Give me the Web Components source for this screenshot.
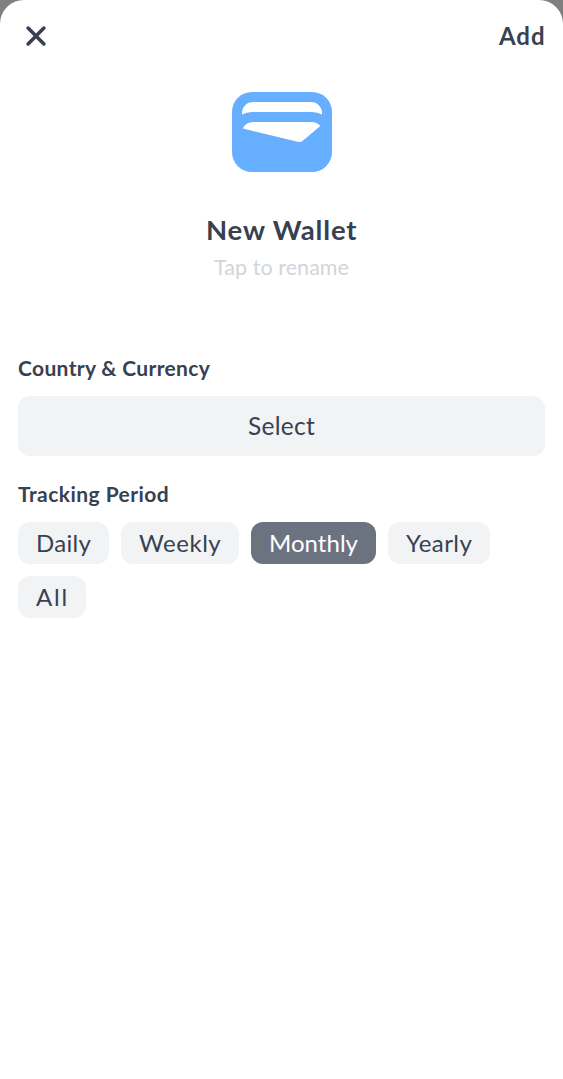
<!DOCTYPE html>
<html lang="en">
<head>
<meta charset="utf-8">
<title>New Wallet</title>
<style>
  html, body { margin: 0; height: 100%; }
  body { background: #808080; color: #374151; font-family: Lato, "Noto Sans", sans-serif; overflow: hidden; }
</style>
</head>
<body>
<wallet-sheet></wallet-sheet>
<script>
// A line of text tracked so that it fills the given measure.
class TextLine extends HTMLElement {
  connectedCallback() {
    const root = this.attachShadow({ mode: 'open' });
    root.innerHTML = `<style>
      :host { display: inline-block; white-space: nowrap; }
      span { display: inline-block; white-space: pre; }
    </style><span><slot></slot></span>`;
    const measure = Number(this.getAttribute('measure'));
    const span = root.querySelector('span');
    this.style.width = measure + 'px';
    const gaps = this.textContent.length - 0.5;
    const spacing = (measure - span.getBoundingClientRect().width) / gaps;
    span.style.letterSpacing = spacing.toFixed(3) + 'px';
  }
}

class CloseIcon extends HTMLElement {
  connectedCallback() {
    this.attachShadow({ mode: 'open' }).innerHTML = `<style>
      :host, svg { display: block; width: 36px; height: 36px; }
    </style>
    <svg viewBox="0 0 36 36" fill="none" stroke="currentColor" stroke-width="3.6" stroke-linecap="round"><path d="M10.1 10.1l15.8 15.8M25.9 10.1L10.1 25.9"/></svg>`;
  }
}

class WalletIcon extends HTMLElement {
  connectedCallback() {
    this.attachShadow({ mode: 'open' }).innerHTML = `<style>
      :host, svg { display: block; width: 100px; height: 80px; }
    </style>
    <svg viewBox="0 0 100 80">
      <rect width="100" height="80" rx="20" fill="#66aeff"/>
      <path fill="#fff" d="M10 22.5V21A11 11 0 0 1 21 10H79A11 11 0 0 1 90 21V22.5Q85.500 20 80 20H20Q14.500 20 10 22.500Z"/>
      <path fill="#fff" d="M11 36.500Q13.500 30 21 30H79Q85 30 88.300 34L70.500 49Q69 50.300 66.500 49.900Z"/>
    </svg>`;
  }
}

class FormSection extends HTMLElement {
  connectedCallback() {
    this.attachShadow({ mode: 'open' }).innerHTML = `<style>
      :host { display: block; }
      h2 { margin: 0 0 12px; font-size: 21px; font-weight: 700; line-height: 28px; height: 30px; }
    </style><h2><slot name="label"></slot></h2><slot></slot>`;
  }
}

class SelectField extends HTMLElement {
  connectedCallback() {
    this.attachShadow({ mode: 'open' }).innerHTML = `<style>
      :host { display: flex; justify-content: center; height: 60px; border-radius: 12px; background: #f2f3f5; font-size: 24.5px; line-height: 59px; }
    </style><slot></slot>`;
  }
}

class PeriodChip extends HTMLElement {
  connectedCallback() {
    this.attachShadow({ mode: 'open' }).innerHTML = `<style>
      :host { display: block; height: 42px; padding: 0 18px; border-radius: 12px; background: #f2f3f5; font-size: 24px; line-height: 42px; }
      :host([selected]) { background: #6b7280; color: #fff; }
    </style><slot></slot>`;
  }
}

class WalletSheet extends HTMLElement {
  connectedCallback() {
    this.attachShadow({ mode: 'open' }).innerHTML = `<style>
      :host { display: block; box-sizing: border-box; height: 100%; padding: 18px 18px 0; background: #fff; border-radius: 24px 24px 0 0; }
      header { display: flex; justify-content: space-between; height: 36px; font-size: 24px; font-weight: 700; line-height: 36px; }
      .hero { display: flex; flex-direction: column; align-items: center; padding-top: 38px; }
      h1 { margin: 37px 0 0; font-size: 27.5px; font-weight: 700; line-height: 42px; height: 42px; }
      .hint { font-size: 21.5px; line-height: 32px; height: 32px; color: #d1d5db; }
      form-section.country { margin-top: 71px; }
      form-section.period { margin-top: 24px; }
      .chips { display: flex; flex-wrap: wrap; gap: 12px; }
    </style>
    <header><close-icon></close-icon><text-line measure="46">Add</text-line></header>
    <div class="hero">
      <wallet-icon></wallet-icon>
      <h1><text-line measure="151">New Wallet</text-line></h1>
      <div class="hint"><text-line measure="135">Tap to rename</text-line></div>
    </div>
    <form-section class="country">
      <text-line slot="label" measure="192">Country &amp; Currency</text-line>
      <select-field><text-line measure="67">Select</text-line></select-field>
    </form-section>
    <form-section class="period">
      <text-line slot="label" measure="151">Tracking Period</text-line>
      <div class="chips">
        <period-chip><text-line measure="55">Daily</text-line></period-chip>
        <period-chip><text-line measure="82">Weekly</text-line></period-chip>
        <period-chip selected><text-line measure="89">Monthly</text-line></period-chip>
        <period-chip><text-line measure="66">Yearly</text-line></period-chip>
        <period-chip><text-line measure="32">All</text-line></period-chip>
      </div>
    </form-section>`;
  }
}

customElements.define('close-icon', CloseIcon);
customElements.define('wallet-icon', WalletIcon);
customElements.define('form-section', FormSection);
customElements.define('select-field', SelectField);
customElements.define('period-chip', PeriodChip);
customElements.define('wallet-sheet', WalletSheet);
customElements.define('text-line', TextLine);
</script>
</body>
</html>
